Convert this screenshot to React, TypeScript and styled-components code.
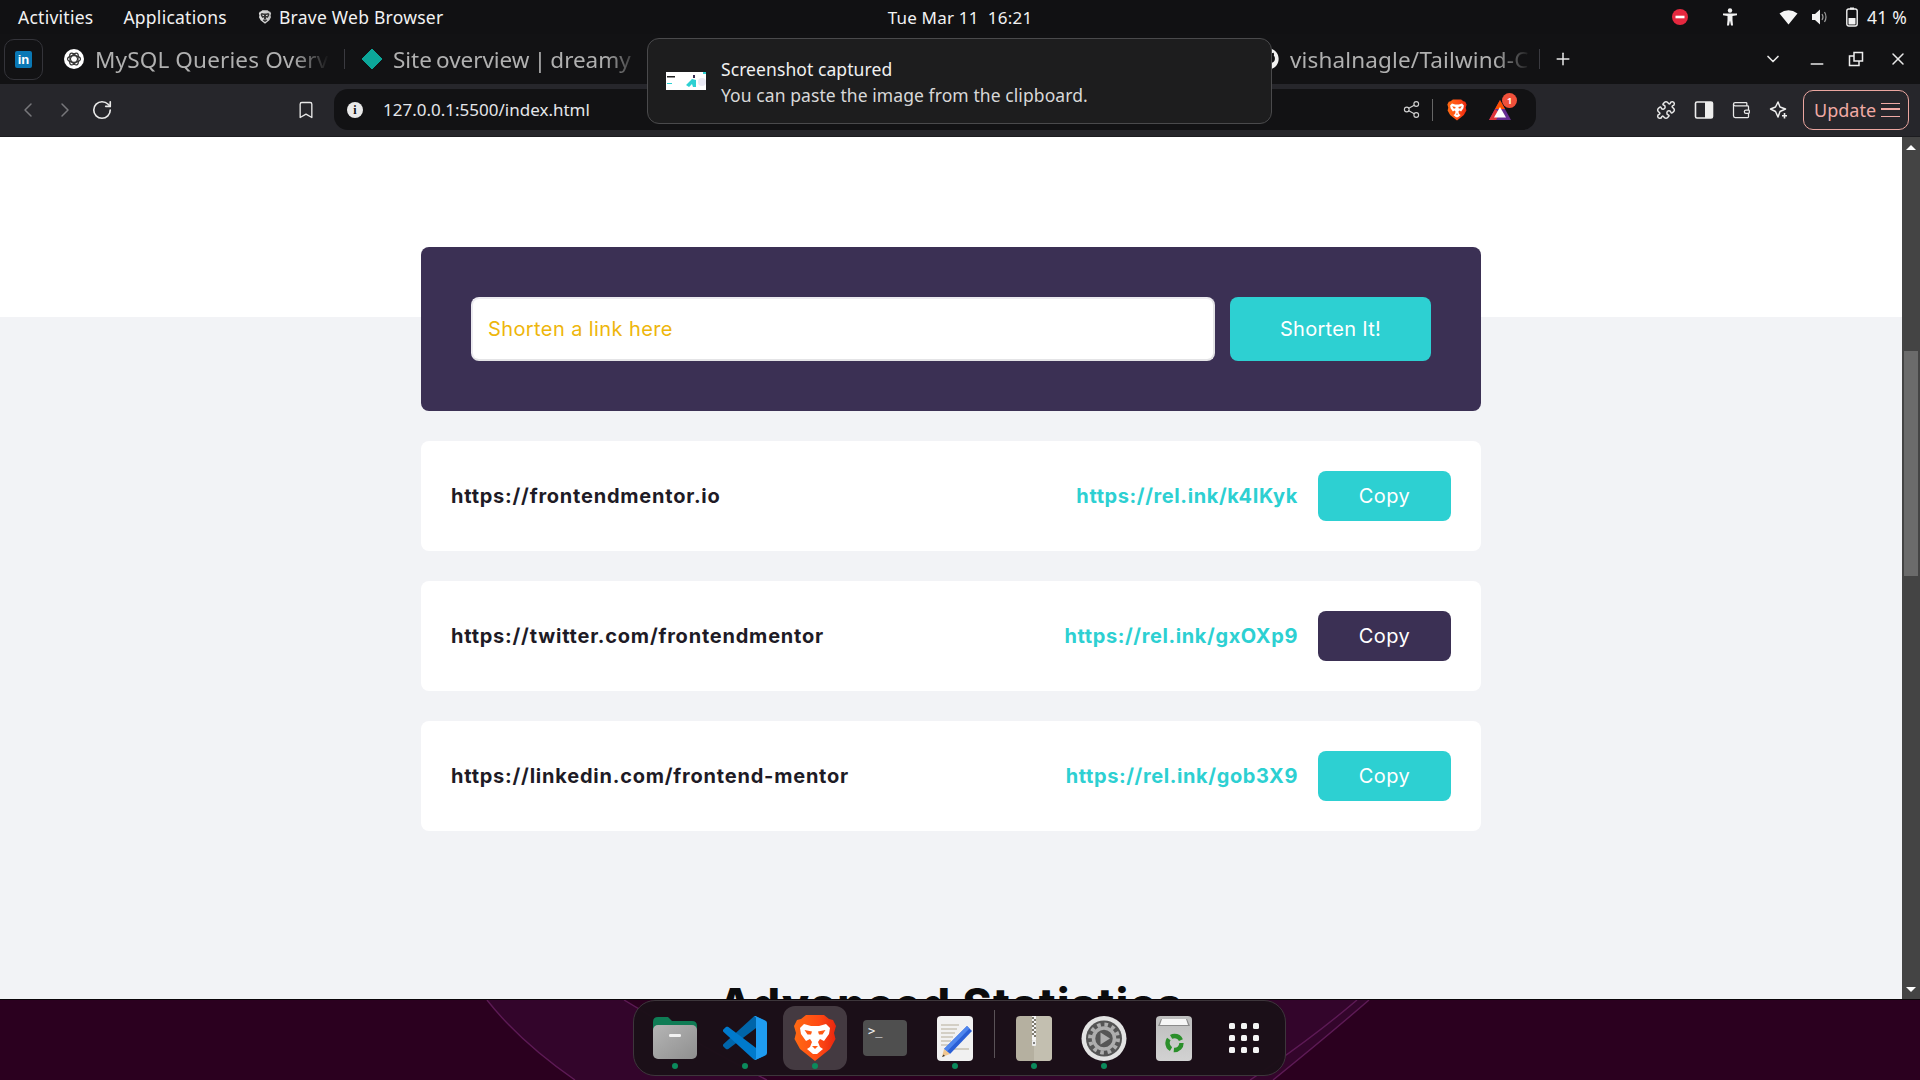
import React from 'react';
import styled, { createGlobalStyle } from 'styled-components';
import { ChevronLeft, ChevronRight, ChevronDown, RotateCw, Bookmark, Share2, Puzzle, Wallet, Plus, Minus, X } from 'lucide-react';
import { FaGithub } from 'react-icons/fa';

const Global = createGlobalStyle`
  html, body { margin: 0; padding: 0; overflow: hidden; background: #000; }
  * { box-sizing: border-box; }
`;

const SYSTEM = `"Noto Sans", "Open Sans", sans-serif`;
const PAGE = `Inter, "Liberation Sans", sans-serif`;

const Screen = styled.div`
  position: relative;
  width: 1920px;
  height: 1080px;
  display: flex;
  flex-direction: column;
  overflow: hidden;
  font-family: ${SYSTEM};
`;

/* ---------- system top bar ---------- */
const TopBar = styled.header`
  height: 34px;
  flex: none;
  background: #111113;
  color: #f2f2f2;
  display: grid;
  grid-template-columns: 1fr auto 1fr;
  align-items: center;
  font-size: 17.5px;
  letter-spacing: 0.25px;
  padding: 0 13px;
`;
const TopLeft = styled.div`
  display: flex;
  align-items: center;
  padding-left: 5px;
`;
const TopItem = styled.span<{ $ml?: number }>`
  margin-left: ${p => p.$ml ?? 0}px;
  white-space: nowrap;
`;
const Clock = styled.div`
  white-space: pre;
  font-size: 17px;
  letter-spacing: 0.2px;
`;
const Tray = styled.div`
  display: flex;
  align-items: center;
  justify-content: flex-end;
`;
const TraySlot = styled.span<{ $ml: number }>`
  display: inline-flex;
  margin-left: ${p => p.$ml}px;
`;

/* ---------- tab strip ---------- */
const TabStrip = styled.div`
  height: 50px;
  flex: none;
  background: #121214;
  display: flex;
  align-items: center;
  padding-left: 4px;
`;
const PinnedTab = styled.div`
  width: 39px;
  height: 41px;
  border: 1px solid #34343a;
  border-radius: 10px;
  display: flex;
  align-items: center;
  justify-content: center;
  margin-right: 21px;
`;
const LinkedIn = styled.span`
  width: 17px;
  height: 17px;
  background: #0a78b5;
  border-radius: 2px;
  color: #fff;
  font: 700 13px/17px "Liberation Sans", sans-serif;
  text-align: center;
`;
const Tab = styled.div<{ $w: number; $pl: number; $pr: number }>`
  width: ${p => p.$w}px;
  padding: 0 ${p => p.$pr}px 0 ${p => p.$pl}px;
  height: 20px;
  display: flex;
  align-items: center;
  gap: 11px;
  border-right: 1px solid #3a3a40;
  color: #b0b0b0;
  font-size: 22.5px;
  letter-spacing: 0.15px;
`;
const TabTitle = styled.span<{ $tight?: boolean }>`
  flex: 1;
  min-width: 0;
  overflow: hidden;
  white-space: nowrap;
  line-height: 30px;
  margin-top: 2px;
  margin-left: ${p => (p.$tight ? -1 : 0)}px;
  word-spacing: ${p => (p.$tight ? -1.5 : 0)}px;
  letter-spacing: ${p => (p.$tight ? -0.05 : 0.15)}px;
  -webkit-mask-image: linear-gradient(to right, #000 85%, transparent 100%);
  mask-image: linear-gradient(to right, #000 85%, transparent 100%);
`;
const TabGap = styled.div`
  width: 606px;
  flex: none;
`;
const IconSlot = styled.span<{ $ml?: number; $mt?: number; $color?: string }>`
  display: inline-flex;
  flex: none;
  margin-left: ${p => p.$ml ?? 0}px;
  margin-top: ${p => p.$mt ?? 0}px;
  color: ${p => p.$color ?? '#e8e8e8'};
`;

/* ---------- browser toolbar ---------- */
const Toolbar = styled.div`
  height: 53px;
  flex: none;
  background: #26262b;
  border-bottom: 1px solid #1c1c20;
  display: flex;
  align-items: center;
  padding-left: 16px;
  padding-bottom: 1px;
`;
const Omnibox = styled.div`
  width: 1202px;
  height: 41px;
  margin-left: 18px;
  background: #121214;
  border-radius: 14px;
  display: flex;
  align-items: center;
  padding-left: 13px;
  color: #e4e6ea;
  font-size: 17px;
`;
const InfoDot = styled.span`
  width: 16px;
  height: 16px;
  border-radius: 50%;
  background: #e9e9e9;
  color: #121214;
  font: 700 12px/16px "Liberation Serif", serif;
  text-align: center;
  flex: none;
`;
const Url = styled.span`
  margin-left: 20px;
  flex: 1;
`;
const OmniDivider = styled.span`
  width: 1px;
  height: 22px;
  background: #666;
  margin-left: 11px;
`;
const BatWrap = styled.span`
  position: relative;
  display: inline-flex;
  margin: 0 24px 0 20px;
`;
const Badge = styled.span`
  position: absolute;
  top: -6px;
  right: -5px;
  width: 15px;
  height: 15px;
  border-radius: 50%;
  background: #f0503a;
  color: #fff;
  font: 700 9px/15px ${SYSTEM};
  text-align: center;
`;
const UpdateButton = styled.div`
  width: 106px;
  height: 40px;
  margin-left: 14px;
  border: 1px solid #eba6a0;
  border-radius: 10px;
  color: #f0aaa5;
  display: flex;
  align-items: center;
  padding-left: 10px;
  gap: 5px;
  font-size: 18px;
`;
const Burger = styled.span`
  width: 19px;
  height: 14px;
  border-top: 1.5px solid #f0aaa5;
  border-bottom: 1.5px solid #f0aaa5;
  position: relative;
  &::after {
    content: '';
    position: absolute;
    left: 0;
    right: 0;
    top: 4.5px;
    height: 1.5px;
    background: #f0aaa5;
  }
`;

/* ---------- page ---------- */
const Middle = styled.div`
  flex: 1;
  min-height: 0;
  display: flex;
`;
const Main = styled.main`
  flex: 1;
  min-width: 0;
  overflow: hidden;
  background: linear-gradient(#fff 180px, #f2f3f6 180px);
  padding-top: 110px;
  display: flex;
  flex-direction: column;
  align-items: center;
  font-family: ${PAGE};
`;
const ShortenPanel = styled.form`
  width: 1060px;
  height: 164px;
  flex: none;
  padding: 50px;
  background: #3b3054;
  border-radius: 8px;
  display: flex;
  gap: 15px;
`;
const LinkInput = styled.input`
  flex: 1;
  min-width: 0;
  height: 64px;
  border: 2px solid;
  border-color: #ecebf0 #e4e4e6 #e4e4e6 #ecebf0;
  border-radius: 8px;
  background: #fff;
  padding: 0 15px;
  font: 400 20px ${PAGE};
  letter-spacing: 0.4px;
  &::placeholder { color: #eeb60c; opacity: 1; }
`;
const ShortenButton = styled.button`
  width: 201px;
  height: 64px;
  flex: none;
  border: 0;
  border-radius: 8px;
  background: #2dd0d2;
  color: #fff;
  font: 400 20px ${PAGE};
  letter-spacing: 0.3px;
`;
const ResultList = styled.section`
  width: 1060px;
  flex: none;
  margin-top: 30px;
  display: flex;
  flex-direction: column;
  gap: 30px;
`;
const ResultCard = styled.article`
  height: 110px;
  padding: 0 30px;
  background: #fff;
  border-radius: 8px;
  display: flex;
  align-items: center;
`;
const LongUrl = styled.span`
  flex: 1;
  font-weight: 700;
  font-size: 20px;
  color: #1e1b26;
  letter-spacing: 0.78px;
`;
const ShortUrl = styled.a`
  font-weight: 700;
  font-size: 20px;
  color: #2dd0d2;
  letter-spacing: 0.6px;
`;
const CopyButton = styled.button<{ $dark?: boolean }>`
  width: 133px;
  height: 50px;
  margin-left: 20px;
  border: 0;
  border-radius: 8px;
  background: ${p => (p.$dark ? '#3b3054' : '#2dd0d2')};
  color: #fff;
  font: 400 20px ${PAGE};
  letter-spacing: 0.5px;
`;
const SectionTitle = styled.h2`
  margin: 153px 0 0;
  flex: none;
  font-size: 44px;
  line-height: 40px;
  font-weight: 800;
  letter-spacing: 1.4px;
  color: #0b0b0d;
  white-space: nowrap;
`;

const ScrollBar = styled.div`
  width: 18px;
  flex: none;
  background: #444;
  display: flex;
  flex-direction: column;
  align-items: center;
  padding: 8px 0 7px;
`;
const ArrowUp = styled.span`
  width: 0;
  height: 0;
  border-left: 5px solid transparent;
  border-right: 5px solid transparent;
  border-bottom: 5px solid #fff;
  flex: none;
`;
const ArrowDown = styled(ArrowUp)`
  border-bottom: 0;
  border-top: 5px solid #fff;
`;
const Thumb = styled.span`
  width: 14px;
  height: 225px;
  background: #6b6b6b;
  margin-top: 201px;
  margin-bottom: auto;
  flex: none;
`;

/* ---------- dock ---------- */
const Wallpaper = styled.footer`
  position: relative;
  height: 81px;
  flex: none;
  background: #2b001f;
  border-top: 1px solid #0a0408;
  display: flex;
  justify-content: center;
`;
const WallpaperArt = styled.svg`
  position: absolute;
  inset: 0;
  width: 100%;
  height: 100%;
`;
const Dock = styled.nav`
  position: relative;
  width: 653px;
  height: 76px;
  padding: 5px 8px 0 6px;
  background: rgba(27, 16, 24, 0.97);
  border: 1px solid #3d363b;
  border-radius: 22px;
  display: flex;
  align-items: flex-start;
  margin-left: -1px;
`;
const DockCell = styled.div`
  width: 70px;
  flex: none;
  display: flex;
  justify-content: center;
`;
const DockTile = styled.div<{ $active?: boolean }>`
  position: relative;
  width: 64px;
  height: 64px;
  border-radius: 12px;
  background: ${p => (p.$active ? '#443a41' : 'transparent')};
  display: flex;
  align-items: center;
  justify-content: center;
`;
const RunDot = styled.span`
  position: absolute;
  left: 29px;
  bottom: 1px;
  width: 6px;
  height: 6px;
  border-radius: 50%;
  background: #0b8a5c;
`;
const DockSeparator = styled.span`
  width: 1px;
  height: 48px;
  margin: 4px 4px 0;
  background: #5a5257;
  flex: none;
`;
const AppGrid = styled.div`
  display: grid;
  grid-template-columns: repeat(3, 6px);
  gap: 6px;
`;
const AppDot = styled.span`
  width: 6px;
  height: 6px;
  border-radius: 1.5px;
  background: #f4f4f4;
`;

/* ---------- notification ---------- */
const Toast = styled.aside`
  position: absolute;
  left: 647px;
  top: 38px;
  width: 625px;
  height: 86px;
  background: #1d1d1e;
  border: 1px solid #4a4a4c;
  border-radius: 12px;
  display: flex;
  align-items: center;
  padding: 0 18px;
  color: #f0f0f0;
  font-size: 17.5px;
  letter-spacing: 0.08px;
`;
const ToastText = styled.div`
  margin-left: 15px;
  padding-top: 2px;
  display: flex;
  flex-direction: column;
  gap: 3px;
  line-height: 23px;
`;
const ToastBody = styled.span`
  color: #d8d8d8;
`;

/* ---------- icons ---------- */
const BraveLogo: React.FC<{ size: number; mono?: boolean }> = ({ size, mono }) => {
  const id = mono ? 'bm' : 'bc' + size;
  const cut = mono ? '#ddd' : '#ff5a14';
  return (
    <svg width={size} height={size} viewBox="0 0 48 48">
      <defs>
        <linearGradient id={id} x1="0" y1="0" x2="1" y2="0">
          <stop offset="0" stopColor={mono ? '#e0e0e0' : '#ff6a13'} />
          <stop offset="0.6" stopColor={mono ? '#d0d0d0' : '#ff4a14'} />
          <stop offset="1" stopColor={mono ? '#c0c0c0' : '#e8260f'} />
        </linearGradient>
      </defs>
      <path d="M15 1H33L38 5L42 6L45 12L43 19L44.5 25L39 35L24 47L9 35L3.5 25L5 19L3 12L6 6L10 5Z" fill={`url(#${id})`} />
      <path d="M9 14L13 10L20 12H28L35 10L39 14L38 20L33 27L29 25L27 28L29 33L32 35L26 40H22L16 35L19 33L21 28L19 25L15 27L10 20Z" fill={mono ? '#333' : '#fff'} />
      <path d="M13.5 16L21 17.5L20 20.5L16.5 20.5ZM34.5 16L27 17.5L28 20.5L31.5 20.5Z" fill={cut} />
      <path d="M21 32H27L24 35Z" fill={cut} />
    </svg>
  );
};

const FolderIcon = () => (
  <svg width="48" height="48" viewBox="0 0 48 48">
    <defs>
      <linearGradient id="fg" x1="0" y1="0" x2="1" y2="1">
        <stop offset="0" stopColor="#b5b5b5" />
        <stop offset="1" stopColor="#8f8f8f" />
      </linearGradient>
    </defs>
    <path d="M2 8Q2 3 7 3H17L21 7H41Q46 7 46 12V20H2Z" fill="#0f7c55" />
    <rect x="2" y="11" width="44" height="34" rx="5" fill="url(#fg)" />
    <rect x="18" y="20" width="12" height="3" rx="1.2" fill="#f2f2f2" />
  </svg>
);

const VSCodeIcon = () => (
  <svg width="44" height="44" viewBox="0 0 100 100">
    <path d="M96.4614 10.7962L75.8569 0.875542C73.4719 -0.272773 70.6217 0.211611 68.75 2.08333L1.29858 63.5832C-0.515693 65.2373 -0.513607 68.0937 1.30308 69.7452L6.81272 74.754C8.29793 76.1042 10.5347 76.2036 12.1338 74.9905L93.3609 13.3699C96.086 11.3026 100 13.2462 100 16.6667V16.4275C100 14.0265 98.6246 11.8378 96.4614 10.7962Z" fill="#0065a9" />
    <path d="M96.4614 89.2038L75.8569 99.1245C73.4719 100.273 70.6217 99.7884 68.75 97.9167L1.29858 36.4169C-0.515693 34.7627 -0.513607 31.9063 1.30308 30.2548L6.81272 25.246C8.29793 23.8958 10.5347 23.7964 12.1338 25.0095L93.3609 86.6301C96.086 88.6974 100 86.7538 100 83.3334V83.5726C100 85.9735 98.6246 88.1622 96.4614 89.2038Z" fill="#007acc" />
    <path d="M75.8578 99.1263C73.4721 100.274 70.6219 99.7885 68.75 97.9166C71.0564 100.223 75 98.5895 75 95.3278V4.67213C75 1.41039 71.0564 -0.223106 68.75 2.08329C70.6219 0.211402 73.4721 -0.273666 75.8578 0.873633L96.4587 10.7807C98.6234 11.8217 100 14.0112 100 16.4132V83.5871C100 85.9891 98.6234 88.1786 96.4586 89.2196L75.8578 99.1263Z" fill="#1f9cf0" />
  </svg>
);

const TerminalIcon = () => (
  <svg width="48" height="48" viewBox="0 0 48 48">
    <rect x="2" y="6" width="44" height="36" rx="4" fill="#4f4f4f" />
    <text x="7" y="21" fill="#f2f2f2" fontFamily="'DejaVu Sans Mono', monospace" fontSize="12">&gt;_</text>
  </svg>
);

const EditorIcon = () => (
  <svg width="48" height="48" viewBox="0 0 48 48">
    <rect x="6" y="2" width="36" height="45" rx="4" fill="#f1f1f1" />
    <g stroke="#c9c4b6" strokeWidth="1.6">
      <path d="M10 11H28M10 15H26M10 19H24M10 23H22M10 27H20M10 31H18" />
      <path d="M20 35H38" />
    </g>
    <path d="M36 12L41 17L19 40L13 35Z" fill="#2a5fd6" />
    <path d="M36 12L38.5 14.5L16 37.5L13 35Z" fill="#4f86ee" />
    <path d="M13 35L19 40L11 43Z" fill="#f0c690" />
    <path d="M12.5 40.5L14 42L11 43Z" fill="#333" />
  </svg>
);

const ZipIcon = () => (
  <svg width="48" height="48" viewBox="0 0 48 48">
    <rect x="6" y="2" width="36" height="45" rx="4" fill="#b5b0a0" />
    <path d="M24 2H38Q42 2 42 6V43Q42 47 38 47H24Z" fill="#c3bfb0" />
    <rect x="22" y="2" width="4" height="24" fill="#f4f4f4" />
    <path d="M22 3h2v2h-2zM24 5h2v2h-2zM22 7h2v2h-2zM24 9h2v2h-2zM22 11h2v2h-2zM24 13h2v2h-2zM22 15h2v2h-2zM24 17h2v2h-2zM22 19h2v2h-2zM24 21h2v2h-2z" fill="#7d7a6f" />
    <rect x="22" y="26" width="4" height="6" rx="1" fill="#eeeeee" />
    <rect x="23.2" y="28" width="1.6" height="2" fill="#666" />
  </svg>
);

const SettingsIcon = () => (
  <svg width="48" height="48" viewBox="0 0 48 48">
    <circle cx="24" cy="24.5" r="22.5" fill="#e3e3e3" />
    <circle cx="24" cy="24.5" r="18" fill="#555" />
    <circle cx="24" cy="24.5" r="14" fill="none" stroke="#aeaeae" strokeWidth="4" strokeDasharray="3.6 3.73" />
    <circle cx="24" cy="24.5" r="10.5" fill="none" stroke="#aeaeae" strokeWidth="3.5" />
    <path d="M20.5 18.5L30 24.5L20.5 30.5Z" fill="#aeaeae" />
  </svg>
);

const TrashIcon = () => (
  <svg width="48" height="48" viewBox="0 0 48 48">
    <defs>
      <linearGradient id="tg" x1="0" y1="0" x2="0" y2="1">
        <stop offset="0" stopColor="#bdbdbd" />
        <stop offset="1" stopColor="#d2d2d2" />
      </linearGradient>
    </defs>
    <rect x="6" y="2" width="36" height="45" rx="4" fill="url(#tg)" />
    <path d="M11 5H37L40 12H8Z" fill="#8c8c8c" />
    <path d="M12 5H36L38 11H10Z" fill="#f7f7f7" />
    <circle cx="24.5" cy="29" r="7" fill="none" stroke="#2b8f2b" strokeWidth="4.4" strokeDasharray="11.6 3" />
  </svg>
);

const ScreenshotThumb = () => (
  <svg width="40" height="20" viewBox="0 0 40 20">
    <rect y="1" width="40" height="18" fill="#fff" />
    <rect x="1" y="5" width="8" height="1.5" fill="#222" />
    <rect x="1" y="12" width="5" height="1" fill="#2dd0d2" />
    <path d="M20 14L26 8L30 9V16H27L26 13L23 16Z" fill="#2dd0d2" />
    <rect x="27" y="4" width="2" height="3" fill="#3b3054" />
    <rect x="37" y="1" width="3" height="2" fill="#2dd0d2" />
    <circle cx="36" cy="11" r="4" fill="#e9e9f4" />
  </svg>
);

const SidePanelIcon = () => (
  <svg width="20" height="20" viewBox="0 0 20 20">
    <rect x="1.5" y="2" width="17" height="16" rx="1.5" fill="none" stroke="#eee" strokeWidth="1.6" />
    <rect x="11" y="2" width="7.5" height="16" fill="#eee" />
  </svg>
);

const SparkleIcon = () => (
  <svg width="20" height="20" viewBox="0 0 20 20" fill="none" stroke="#eee" strokeWidth="1.5" strokeLinejoin="round">
    <path d="M9 2L11 7L16.5 9L11 11.5L9 17L6.5 11.5L1.5 9L6.5 7Z" />
    <path d="M15.5 13V18.5M13 15.8H18" strokeWidth="1.6" />
  </svg>
);

const BatTriangle = () => (
  <svg width="24" height="22" viewBox="0 0 24 22">
    <path d="M12 1L23 21H1Z" fill="#662d91" />
    <path d="M12 1L17 10H7Z" fill="#ff5000" />
    <path d="M7 10L1 21H8L12 14Z" fill="#e0353a" />
    <path d="M12 8L18 18.5H6Z" fill="#fff" />
  </svg>
);

const ChatGptDot = () => (
  <svg width="20" height="20" viewBox="0 0 20 20">
    <circle cx="10" cy="10" r="10" fill="#fff" />
    <g fill="none" stroke="#333" strokeWidth="1.2">
      <ellipse cx="10" cy="10" rx="6.5" ry="3.4" />
      <ellipse cx="10" cy="10" rx="6.5" ry="3.4" transform="rotate(60 10 10)" />
      <ellipse cx="10" cy="10" rx="6.5" ry="3.4" transform="rotate(120 10 10)" />
    </g>
  </svg>
);

const DiamondIcon = () => (
  <svg width="22" height="22" viewBox="0 0 22 22">
    <path d="M11 1L21 11L11 21L1 11Z" fill="#0ca79a" stroke="#0ca79a" strokeLinejoin="round" />
  </svg>
);

const RestoreIcon = () => (
  <svg width="16" height="16" viewBox="0 0 16 16" fill="none" stroke="#eee" strokeWidth="1.5">
    <rect x="6" y="1.5" width="8.5" height="8.5" />
    <path d="M6 5H1.5V14.5H11V10" />
  </svg>
);

const NoEntry = () => (
  <svg width="16" height="16" viewBox="0 0 16 16">
    <circle cx="8" cy="8" r="8" fill="#e5283f" />
    <rect x="3.5" y="6.7" width="9" height="2.6" fill="#fff" />
  </svg>
);
const PersonIcon = () => (
  <svg width="16" height="18" viewBox="0 0 16 18" fill="#f2f2f2">
    <circle cx="8" cy="2.5" r="2.2" />
    <path d="M1 5.5H15V7.2L10.5 8V12L11 17.5H9L8 12.5L7 17.5H5L5.5 12V8L1 7.2Z" />
  </svg>
);
const WifiIcon = () => (
  <svg width="19" height="16" viewBox="0 0 19 16" fill="#f5f5f5">
    <path d="M0.5 4.5Q9.5 -2 18.5 4.5L9.5 15.5Z" />
  </svg>
);
const SpeakerIcon = () => (
  <svg width="18" height="18" viewBox="0 0 18 18">
    <path d="M1 6H4L9 1.5V16.5L4 12H1Z" fill="#f2f2f2" />
    <path d="M11 6Q13 9 11 12M13.5 4Q16.5 9 13.5 14" fill="none" stroke="#9a9a9a" strokeWidth="1.2" />
  </svg>
);
const BatteryIcon = () => (
  <svg width="12" height="20" viewBox="0 0 12 20">
    <rect x="4" y="0.5" width="4" height="2" fill="#f2f2f2" />
    <rect x="0.8" y="2" width="10.4" height="17" rx="2" fill="none" stroke="#f2f2f2" strokeWidth="1.4" />
    <rect x="2.5" y="11" width="7" height="6.5" rx="0.5" fill="#f2f2f2" />
  </svg>
);

const results = [
  { long: 'https://frontendmentor.io', short: 'https://rel.ink/k4IKyk', dark: false },
  { long: 'https://twitter.com/frontendmentor', short: 'https://rel.ink/gxOXp9', dark: true },
  { long: 'https://linkedin.com/frontend-mentor', short: 'https://rel.ink/gob3X9', dark: false },
];

export default function App() {
  return (
    <Screen>
      <Global />
      <TopBar>
        <TopLeft>
          <TopItem>Activities</TopItem>
          <TopItem $ml={30}>Applications</TopItem>
          <IconSlot $ml={31}><BraveLogo size={14} mono /></IconSlot>
          <TopItem $ml={7}>Brave Web Browser</TopItem>
        </TopLeft>
        <Clock>Tue Mar 11  16:21</Clock>
        <Tray>
          <TraySlot $ml={0}><NoEntry /></TraySlot>
          <TraySlot $ml={34}><PersonIcon /></TraySlot>
          <TraySlot $ml={41}><WifiIcon /></TraySlot>
          <TraySlot $ml={13}><SpeakerIcon /></TraySlot>
          <TraySlot $ml={17}><BatteryIcon /></TraySlot>
          <TopItem $ml={9}>41 %</TopItem>
        </Tray>
      </TopBar>

      <TabStrip>
        <PinnedTab><LinkedIn>in</LinkedIn></PinnedTab>
        <Tab $w={281} $pl={0} $pr={15}>
          <ChatGptDot />
          <TabTitle>MySQL Queries Overv</TabTitle>
        </Tab>
        <Tab $w={306} $pl={16} $pr={8}>
          <DiamondIcon />
          <TabTitle $tight>Site overview | dreamy</TabTitle>
        </Tab>
        <TabGap />
        <Tab $w={283} $pl={0} $pr={8}>
          <IconSlot $color="#f2f2f2"><FaGithub size={22} /></IconSlot>
          <TabTitle>vishalnagle/Tailwind-C</TabTitle>
        </Tab>
        <IconSlot $ml={13}><Plus size={20} strokeWidth={1.8} /></IconSlot>
        <IconSlot $ml={190}><ChevronDown size={20} strokeWidth={2} /></IconSlot>
        <IconSlot $ml={24} $mt={10}><Minus size={20} strokeWidth={1.6} /></IconSlot>
        <IconSlot $ml={21}><RestoreIcon /></IconSlot>
        <IconSlot $ml={24}><X size={20} strokeWidth={1.8} /></IconSlot>
      </TabStrip>

      <Toolbar>
        <IconSlot $color="#77777b"><ChevronLeft size={24} strokeWidth={1.5} /></IconSlot>
        <IconSlot $ml={13} $color="#77777b"><ChevronRight size={24} strokeWidth={1.5} /></IconSlot>
        <IconSlot $ml={14}><RotateCw size={22} strokeWidth={1.8} /></IconSlot>
        <IconSlot $ml={183}><Bookmark size={20} strokeWidth={1.6} /></IconSlot>
        <Omnibox>
          <InfoDot>i</InfoDot>
          <Url>127.0.0.1:5500/index.html</Url>
          <IconSlot $color="#cfcfcf"><Share2 size={19} strokeWidth={1.4} /></IconSlot>
          <OmniDivider />
          <IconSlot $ml={13}><BraveLogo size={22} /></IconSlot>
          <BatWrap>
            <BatTriangle />
            <Badge>1</Badge>
          </BatWrap>
        </Omnibox>
        <IconSlot $ml={120}><Puzzle size={20} strokeWidth={1.8} /></IconSlot>
        <IconSlot $ml={18}><SidePanelIcon /></IconSlot>
        <IconSlot $ml={17}><Wallet size={20} strokeWidth={1.5} /></IconSlot>
        <IconSlot $ml={18}><SparkleIcon /></IconSlot>
        <UpdateButton>
          Update
          <Burger />
        </UpdateButton>
      </Toolbar>

      <Middle>
        <Main>
          <ShortenPanel>
            <LinkInput placeholder="Shorten a link here" readOnly />
            <ShortenButton type="button">Shorten It!</ShortenButton>
          </ShortenPanel>
          <ResultList>
            {results.map(r => (
              <ResultCard key={r.long}>
                <LongUrl>{r.long}</LongUrl>
                <ShortUrl>{r.short}</ShortUrl>
                <CopyButton type="button" $dark={r.dark}>Copy</CopyButton>
              </ResultCard>
            ))}
          </ResultList>
          <SectionTitle>Advanced Statistics</SectionTitle>
        </Main>
        <ScrollBar>
          <ArrowUp />
          <Thumb />
          <ArrowDown />
        </ScrollBar>
      </Middle>

      <Wallpaper>
        <WallpaperArt viewBox="0 0 1920 80" preserveAspectRatio="none">
          <path d="M487 0Q520 42 575 80H767Q690 40 624 0Z" fill="#33052b" />
          <path d="M1369 0Q1325 38 1273 80H1000V0Z" fill="#33052b" />
          <g fill="none" stroke="#5d1a55" strokeWidth="1.4">
            <path d="M487 0Q520 42 575 80" />
            <path d="M624 0Q690 40 767 80" />
            <path d="M1369 0Q1325 38 1273 80" />
            <path d="M1357 0Q1310 40 1250 80" />
          </g>
        </WallpaperArt>
        <Dock>
          <DockCell><DockTile><FolderIcon /><RunDot /></DockTile></DockCell>
          <DockCell><DockTile><VSCodeIcon /><RunDot /></DockTile></DockCell>
          <DockCell><DockTile $active><BraveLogo size={48} /><RunDot /></DockTile></DockCell>
          <DockCell><DockTile><TerminalIcon /></DockTile></DockCell>
          <DockCell><DockTile><EditorIcon /><RunDot /></DockTile></DockCell>
          <DockSeparator />
          <DockCell><DockTile><ZipIcon /><RunDot /></DockTile></DockCell>
          <DockCell><DockTile><SettingsIcon /><RunDot /></DockTile></DockCell>
          <DockCell><DockTile><TrashIcon /></DockTile></DockCell>
          <DockCell>
            <DockTile>
              <AppGrid>
                {Array.from({ length: 9 }, (_, i) => <AppDot key={i} />)}
              </AppGrid>
            </DockTile>
          </DockCell>
        </Dock>
      </Wallpaper>

      <Toast>
        <ScreenshotThumb />
        <ToastText>
          <span>Screenshot captured</span>
          <ToastBody>You can paste the image from the clipboard.</ToastBody>
        </ToastText>
      </Toast>
    </Screen>
  );
}
